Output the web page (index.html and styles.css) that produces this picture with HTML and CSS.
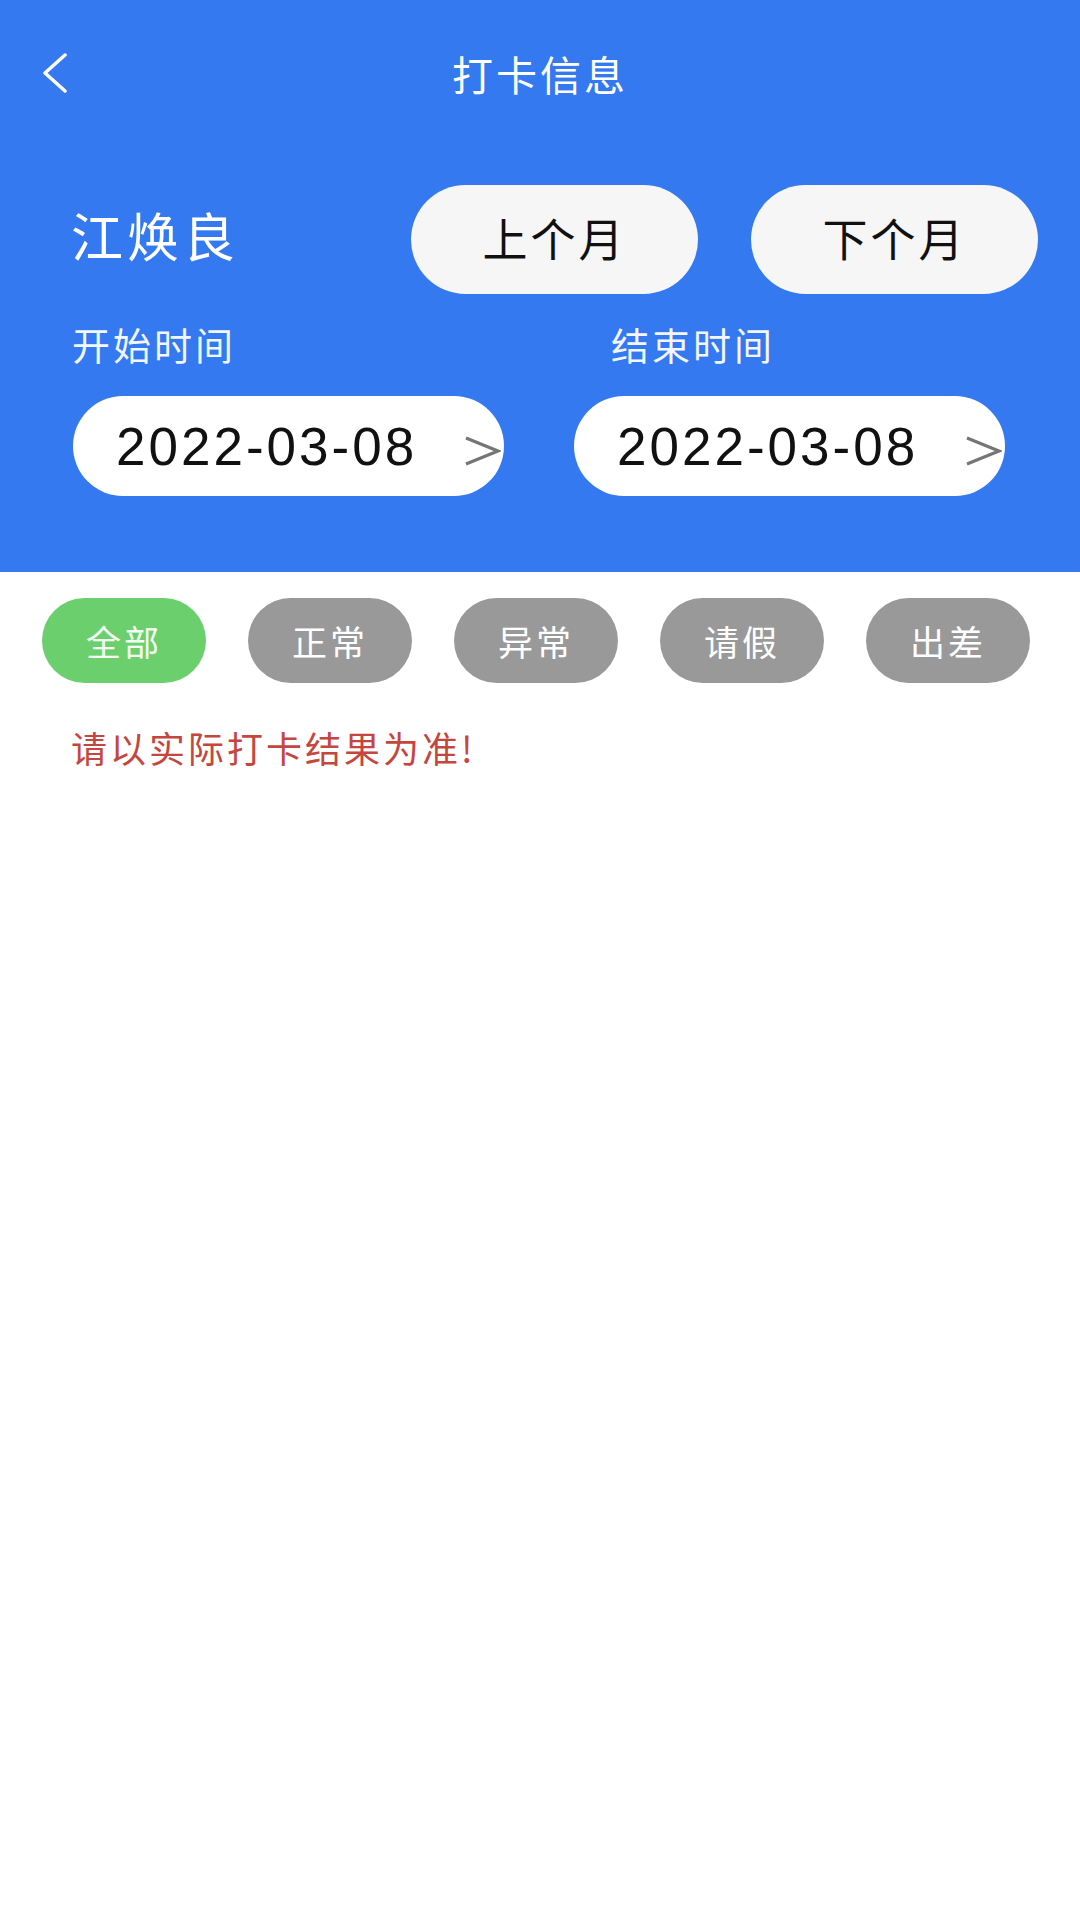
FILE: index.html
```html
<!DOCTYPE html>
<html lang="zh-CN">
<head>
  <meta charset="UTF-8">
  <meta name="viewport" content="width=device-width, initial-scale=1.0">
  <title>打卡信息</title>
  <link rel="stylesheet" href="styles.css">
</head>
<body>
  <header class="top">
    <div class="nav">
      <a class="back" href="#">
        <svg width="26" height="40" viewBox="0 0 26 40"><polyline points="23,2 3,20 23,38" fill="none" stroke="#fff" stroke-width="3.5" stroke-linecap="round" stroke-linejoin="round"/></svg>
      </a>
      <h1 class="title">打卡信息</h1>
      <span></span>
    </div>

    <div class="who">
      <span class="name">江焕良</span>
      <button class="month-btn">上个月</button>
      <button class="month-btn">下个月</button>
    </div>

    <div class="labels">
      <span>开始时间</span>
      <span>结束时间</span>
    </div>

    <div class="dates">
      <div class="date-pill">
        <span class="date-text">2022-03-08</span>
        <svg class="arrow" width="38" height="30" viewBox="0 0 38 30"><polyline points="3,2 35,15 3,28" fill="none" stroke="#757575" stroke-width="3.2"/></svg>
      </div>
      <div class="date-pill">
        <span class="date-text">2022-03-08</span>
        <svg class="arrow" width="38" height="30" viewBox="0 0 38 30"><polyline points="3,2 35,15 3,28" fill="none" stroke="#757575" stroke-width="3.2"/></svg>
      </div>
    </div>
  </header>

  <!-- filter tabs -->
  <div class="filters">
    <button class="tab active">全部</button>
    <button class="tab">正常</button>
    <button class="tab">异常</button>
    <button class="tab">请假</button>
    <button class="tab">出差</button>
  </div>

  <p class="notice">请以实际打卡结果为准!</p>
</body>
</html>
```

FILE: styles.css
```css
/* Attendance page: blue header with date range, filter tabs below */
body {
  margin: 0;
  background: #fff;
  font-family: "Noto Sans CJK SC", "Noto Sans", sans-serif;
  color: #333;
}

.top {
  background: #3479f0;
  height: 572px;
  box-sizing: border-box;
  color: #fff;
}

.nav {
  display: grid;
  grid-template-columns: 1fr auto 1fr;
  align-items: center;
  height: 146px;
}

.back {
  display: flex;
  padding-left: 42px;
}

.title {
  margin: 0;
  font-size: 41px;
  font-weight: normal;
  letter-spacing: 3px;
  line-height: 48px;
}

.who {
  display: flex;
  align-items: center;
  gap: 53px;
  margin-top: 39px;
  padding: 0 42px 0 71px;
  height: 109px;
}

.name {
  flex: 1;
  font-size: 52px;
  letter-spacing: 4px;
  padding-bottom: 10px;
}

.month-btn {
  width: 287px;
  height: 109px;
  border: none;
  border-radius: 55px;
  background: #f6f6f6;
  color: #111;
  font-family: inherit;
  font-size: 45px;
  letter-spacing: 3px;
  padding: 0 0 4px;
}

.labels {
  display: grid;
  grid-template-columns: 539px 1fr;
  margin-top: 30px;
  padding-left: 72px;
  font-size: 38px;
  line-height: 40px;
  letter-spacing: 3px;
  color: #f2f6ff;
}

.dates {
  display: flex;
  gap: 70px;
  margin-top: 32px;
  padding-left: 73px;
}

.date-pill {
  display: flex;
  align-items: center;
  justify-content: space-between;
  width: 431px;
  height: 100px;
  box-sizing: border-box;
  padding: 0 3px 0 43px;
  background: #fff;
  border-radius: 50px;
}

.date-text {
  font-family: "Liberation Sans", Arial, sans-serif;
  font-size: 53px;
  letter-spacing: 3px;
  color: #111;
}

.arrow {
  margin-top: 10px;
}

.filters {
  display: flex;
  gap: 42px;
  margin-top: 26px;
  padding-left: 42px;
}

.tab {
  width: 164px;
  height: 85px;
  border: none;
  border-radius: 43px;
  background: #999;
  color: #fff;
  font-family: inherit;
  font-size: 35px;
  letter-spacing: 3px;
  padding: 0;
}

.tab.active {
  background: #6ccf6e;
  color: #f4fff4;
}

.notice {
  margin: 42px 0 0 71px;
  font-size: 36px;
  line-height: 44px;
  letter-spacing: 3px;
  color: #c4463e;
}
```
